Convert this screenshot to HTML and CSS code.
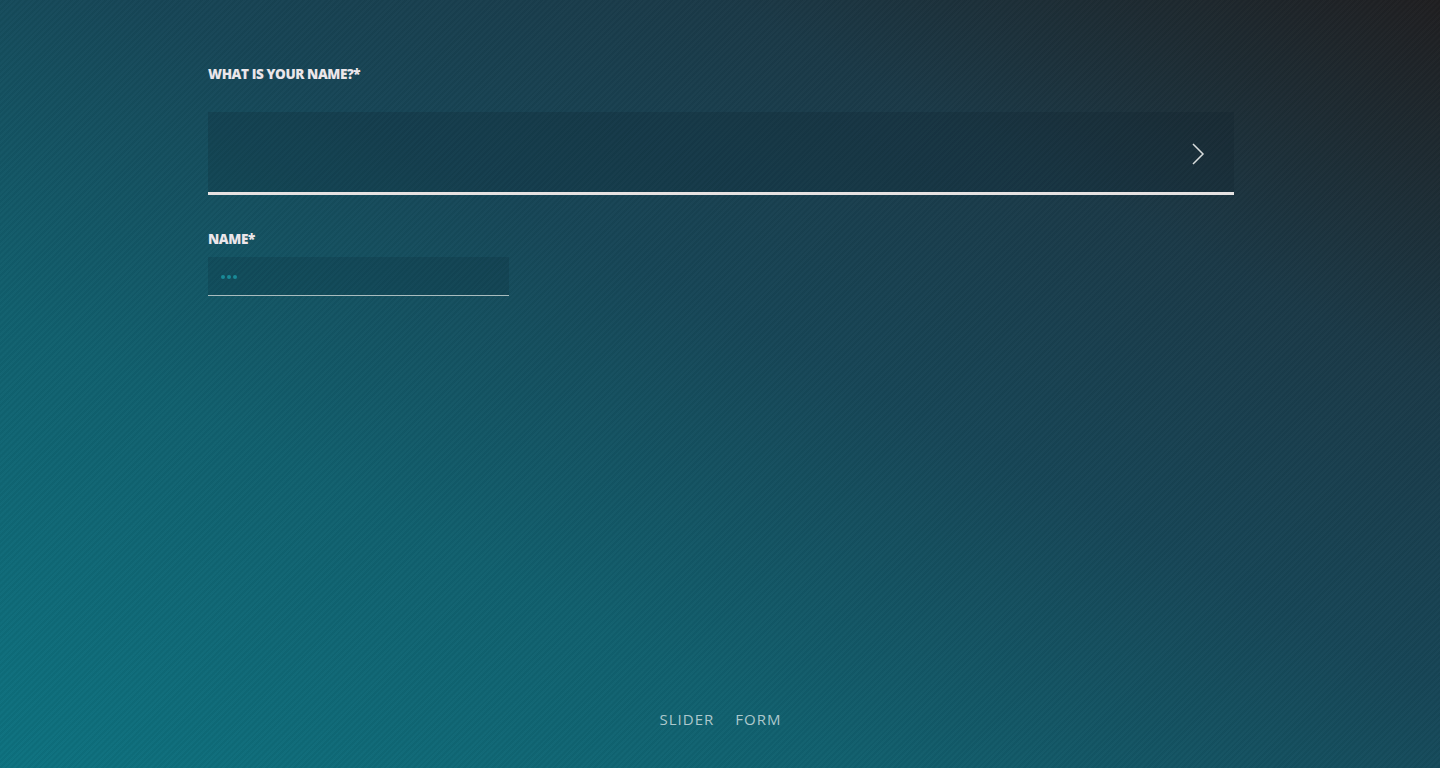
FILE: index.html
```html
<!DOCTYPE html>
<html>
<head>
<meta charset="utf-8">
<link rel="stylesheet" href="styles.css">
</head>
<body>
<div class="page">
  <main class="form">
    <label class="q-label">WHAT IS YOUR NAME?*</label>
    <div class="big-input">
      <svg class="chev" width="14" height="24" viewBox="0 0 14 24"><path d="M2 2 L12 12 L2 22" fill="none" stroke="#d8dcdc" stroke-width="1.5"/></svg>
    </div>
    <label class="f-label">NAME*</label>
    <div class="small-input"><span class="dots"><i></i><i></i><i></i></span></div>
  </main>
  <nav class="footer">
    <a>SLIDER</a>
    <a>FORM</a>
  </nav>
</div>
</body>
</html>
```
FILE: styles.css
```css
html, body { margin: 0; padding: 0; height: 100%; }
body {
  font-family: "Open Sans", Lato, "Liberation Sans", sans-serif;
  background:
    repeating-linear-gradient(135deg, rgba(255,255,255,0.012) 0 2px, rgba(0,0,0,0.03) 2px 4px),
    linear-gradient(to top right, #0d7280 0%, #11606e 30%, #174657 55%, #1b3a48 75%, #201f21 100%);
  overflow: hidden;
}
.page {
  height: 768px;
  display: flex;
  flex-direction: column;
  justify-content: space-between;
}
.form {
  padding: 66px 206px 0 208px;
  display: flex;
  flex-direction: column;
}
.q-label, .f-label {
  color: #ebe6ea;
  font-weight: 800;
  font-size: 13.5px;
  letter-spacing: -0.4px;
  line-height: 16px;
}
.big-input {
  margin-top: 30px;
  height: 80px;
  background: rgba(10, 30, 40, 0.18);
  border-bottom: 3px solid #e6e2e2;
  display: flex;
  align-items: center;
  justify-content: flex-end;
  padding-right: 29px;
}
.chev { margin-top: 3px; }
.f-label { margin-top: 36px; }
.small-input {
  margin-top: 10px;
  width: 288px;
  height: 38px;
  background: rgba(10, 30, 40, 0.15);
  border-bottom: 1px solid #a9bcbe;
  display: flex;
  align-items: center;
  padding-left: 13px;
}
.dots { display: flex; gap: 2px; margin-top: 2px; }
.dots i { width: 4px; height: 4px; border-radius: 50%; background: #198a97; display: block; }
.footer {
  display: flex;
  justify-content: center;
  gap: 21px;
  padding-bottom: 40px;
  padding-left: 1px;
}
.footer a {
  color: #adc8cc;
  font-family: "Open Sans", "Liberation Sans", sans-serif;
  font-size: 15px;
  letter-spacing: 1px;
  line-height: 18px;
}
```
